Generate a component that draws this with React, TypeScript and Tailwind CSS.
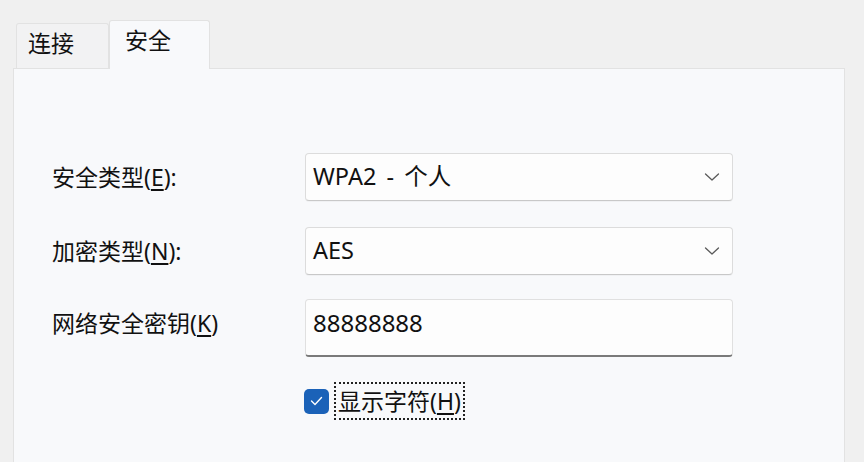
import React from "react";

const font = { fontFamily: '"Noto Sans", "Noto Sans CJK SC", sans-serif' };

function Chevron() {
  return (
    <svg width="16" height="10" viewBox="0 0 16 10" fill="none">
      <path d="M1.5 2 L8 8 L14.5 2" stroke="#5a5a5a" strokeWidth="1.3" strokeLinecap="round" strokeLinejoin="round" />
    </svg>
  );
}

function Select({ value }: { value: string }) {
  return (
    <div className="h-[48px] w-[428px] rounded-[4px] border border-[#dcdcdc] border-b-[#c8c8c8] bg-[#fdfdfd] flex items-center justify-between pl-[7px] pr-[12px] shadow-[0_1px_0_rgba(0,0,0,0.03)]">
      <span className="text-[23.5px] text-[#111] leading-none [word-spacing:4px]">{value}</span>
      <Chevron />
    </div>
  );
}

function Label({ text, k, colon }: { text: string; k: string; colon?: boolean }) {
  return (
    <div className="text-[23px] text-[#111] leading-none">
      {text}(<span className="underline underline-offset-[3px]">{k}</span>){colon ? ":" : ""}
    </div>
  );
}

export default function App() {
  return (
    <div className="w-[864px] h-[462px] bg-[#f0f0f0] overflow-hidden flex flex-col pt-[20px] pl-[13px]" style={font}>
      <div className="flex items-end pl-[3px] h-[49px] relative z-10">
        <div className="w-[93px] h-[45px] bg-[#f2f2f3] border border-[#e2e2e2] border-b-0 rounded-t-[3px] flex items-start pl-[11px] pt-[8px] mb-[1px]">
          <span className="text-[23px] text-[#111] leading-none">连接</span>
        </div>
        <div className="w-[101px] h-[49px] bg-[#f8f9fb] border border-[#e2e2e2] border-b-0 rounded-t-[3px] flex items-start pl-[15px] pt-[8px]">
          <span className="text-[23px] text-[#111] leading-none">安全</span>
        </div>
      </div>
      <div className="flex-1 mr-[19px] bg-[#f8f9fb] border border-[#e2e2e2] border-b-0 -mt-[1px] pt-[84px] pl-[38px]">
        <div className="grid grid-cols-[253px_428px] items-center">
          <Label text="安全类型" k="E" colon />
          <Select value="WPA2 - 个人" />
          <div className="h-[26px] col-span-2" />
          <Label text="加密类型" k="N" colon />
          <Select value="AES" />
          <div className="h-[24px] col-span-2" />
          <div className="self-start pt-[13px]">
            <Label text="网络安全密钥" k="K" />
          </div>
          <div className="h-[58px] w-[428px] rounded-[4px] border border-[#e0e0e0] border-b-[2px] border-b-[#7a7a7a] bg-[#fdfdfd] pl-[7px] pt-[11px]">
            <span className="text-[24px] text-[#111] leading-none">88888888</span>
          </div>
          <div className="h-[25px] col-span-2" />
          <div />
          <div className="flex items-center -ml-[1px]">
            <div className="w-[25px] h-[25px] rounded-[5px] bg-[#1b62b8] flex items-center justify-center">
              <svg width="13" height="10" viewBox="0 0 13 10" fill="none">
                <path d="M1.5 5 L5 8.5 L11.5 1.5" stroke="#fff" strokeWidth="1.4" strokeLinecap="round" strokeLinejoin="round" />
              </svg>
            </div>
            <div className="ml-[5px] h-[38px] px-[2px] border-2 border-dotted border-[#222] flex items-center">
              <Label text="显示字符" k="H" />
            </div>
          </div>
        </div>
      </div>
    </div>
  );
}
